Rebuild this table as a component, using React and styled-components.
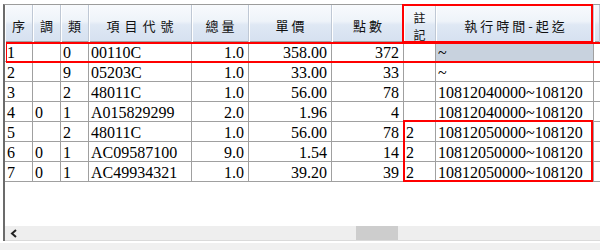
import React from 'react'
import styled, { createGlobalStyle } from 'styled-components'

const GlobalStyle = createGlobalStyle`
  html, body {
    margin: 0;
    padding: 0;
    background: #ffffff;
  }
  body {
    width: 600px;
    height: 250px;
    overflow: hidden;
  }
`;

const COLS = '28px 28px 28px 103px 57px 83px 72px 32px 158px 1fr';

const Window = styled.div`
  width: 600px;
  height: 250px;
  box-sizing: border-box;
  padding: 4px 0 0 3px;
  display: flex;
  flex-direction: column;
  background: #ffffff;
  overflow: hidden;
`;

const GridView = styled.div`
  position: relative;
  height: 237px;
  box-sizing: border-box;
  border-left: 2px solid #6b6b6b;
  border-top: 1px solid #9c9c9c;
  display: flex;
  flex-direction: column;
`;

const HeaderRow = styled.div`
  display: grid;
  grid-template-columns: ${COLS};
  height: 37px;
  box-sizing: border-box;
  border-bottom: 1px solid #a0a0a0;
  background: linear-gradient(#f8fafd 0%, #eef3f9 45%, #dfe8f4 55%, #d6e1f0 100%);
`;

const HeadCell = styled.div`
  display: flex;
  flex-direction: column;
  align-items: center;
  justify-content: center;
  padding-top: 4px;
  padding-left: ${p => p.$spread}px;
  box-sizing: border-box;
  border-right: 1px solid #bfc8d5;
  box-shadow: inset 1px 0 0 #ffffff;
  font-family: "Noto Sans CJK TC", "Noto Sans CJK SC", sans-serif;
  font-size: 13px;
  line-height: 16px;
  letter-spacing: ${p => p.$spread}px;
  color: #111111;
  text-align: center;
  white-space: nowrap;
`;

const StackChar = styled.span`
  display: block;
  font-size: 12px;
  line-height: 17px;
`;

const Row = styled.div`
  display: grid;
  grid-template-columns: ${COLS};
  height: 20px;
`;

const Cell = styled.div`
  height: 20px;
  box-sizing: border-box;
  padding: 2px 4px 0 2px;
  border-right: 1px solid #a0a0a0;
  border-bottom: 1px solid #a0a0a0;
  background: ${p => (p.$selected ? '#c8d2de' : '#ffffff')};
  font-family: "Liberation Serif", "Times New Roman", serif;
  font-size: 16px;
  line-height: 17px;
  color: #000000;
  text-align: ${p => p.$align || 'left'};
  white-space: nowrap;
  overflow: hidden;
`;

const Blank = styled.div`
  flex: 1;
  background: #ffffff;
`;

const HScroll = styled.div`
  height: 15px;
  box-sizing: border-box;
  border-bottom: 1px solid #dadada;
  background: #eeeeee;
  display: flex;
  align-items: stretch;
`;

const ArrowButton = styled.div`
  width: 17px;
  display: flex;
  align-items: center;
  justify-content: center;
`;

const Thumb = styled.div`
  margin-left: 334px;
  width: 42px;
  background: #cdcdcd;
`;

const Gap = styled.div`
  height: 2px;
  background: #ffffff;
`;

const StatusStrip = styled.div`
  flex: 1;
  margin-left: -3px;
  background: #f0f0f0;
`;

const Mark = styled.div`
  position: absolute;
  top: ${p => p.$top}px;
  left: ${p => p.$left}px;
  width: ${p => p.$w}px;
  height: ${p => p.$h}px;
  box-sizing: border-box;
  border: 2px solid #ff0000;
  border-left-width: ${p => p.$lw || 2}px;
  border-right-width: ${p => (p.$open ? 0 : 2)}px;
  pointer-events: none;
`;

const headers = [
  { t: '序', s: 0 },
  { t: '調', s: 0 },
  { t: '類', s: 0 },
  { t: '項目代號', s: 5 },
  { t: '總量', s: 3 },
  { t: '單價', s: 3 },
  { t: '點數', s: 3 },
  { t: <><StackChar>註</StackChar><StackChar>記</StackChar></>, s: 0 },
  { t: '執行時間-起迄', s: 3 },
  { t: '', s: 0 },
];

const rows = [
  ['1', '', '0', '00110C', '1.0', '358.00', '372', '', '~'],
  ['2', '', '9', '05203C', '1.0', '33.00', '33', '', '~'],
  ['3', '', '2', '48011C', '1.0', '56.00', '78', '', '10812040000~108120'],
  ['4', '0', '1', 'A015829299', '2.0', '1.96', '4', '', '10812040000~108120'],
  ['5', '', '2', '48011C', '1.0', '56.00', '78', '2', '10812050000~108120'],
  ['6', '0', '1', 'AC09587100', '9.0', '1.54', '14', '2', '10812050000~108120'],
  ['7', '0', '1', 'AC49934321', '1.0', '39.20', '39', '2', '10812050000~108120'],
];

const rightCols = [4, 5, 6];

const App = () => (
  <>
    <GlobalStyle />
    <Window>
      <GridView>
        <HeaderRow>
          {headers.map((h, i) => (
            <HeadCell key={i} $spread={h.s}>{h.t}</HeadCell>
          ))}
        </HeaderRow>
        {rows.map((r, ri) => (
          <Row key={ri}>
            {r.map((v, ci) => (
              <Cell
                key={ci}
                $align={rightCols.includes(ci) ? 'right' : 'left'}
                $selected={ri === 0 && ci === 8}
              >
                {v}
              </Cell>
            ))}
            <Cell />
          </Row>
        ))}
        <Blank />
        <HScroll>
          <ArrowButton>
            <svg width="8" height="9" viewBox="0 0 8 9">
              <polyline points="6,1 2,4.5 6,8" fill="none" stroke="#222" strokeWidth="2" />
            </svg>
          </ArrowButton>
          <Thumb />
        </HScroll>

        <Mark $top={-1} $left={397} $w={191} $h={39} />
        <Mark $top={37} $left={1} $w={594} $h={21} $lw={1} $open />
        <Mark $top={115} $left={398} $w={190} $h={62} />
      </GridView>
      <Gap />
      <StatusStrip />
    </Window>
  </>
);

export default App
